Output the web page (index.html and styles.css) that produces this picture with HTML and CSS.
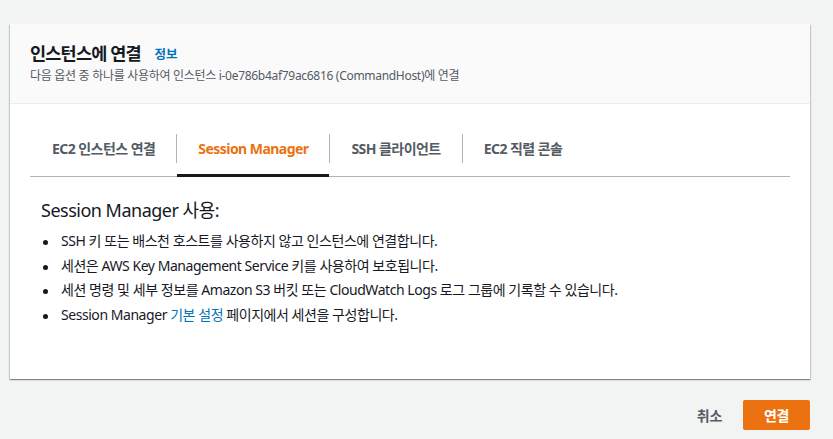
FILE: index.html
```html
<!DOCTYPE html>
<html lang="ko">
<head>
<meta charset="utf-8">
<link rel="stylesheet" href="styles.css">
</head>
<body>
<div class="page">
  <section class="card">
    <header class="card-header">
      <h1 class="title">인스턴스에 연결 <a class="info">정보</a></h1>
      <p class="subtitle">다음 옵션 중 하나를 사용하여 인스턴스 i-0e786b4af79ac6816 (CommandHost)에 연결</p>
    </header>
    <div class="card-body">
      <ul class="tabs">
        <li class="tab first"><span class="tab-label">EC2 인스턴스 연결</span></li>
        <li class="tab active"><span class="tab-label">Session Manager</span></li>
        <li class="tab"><span class="tab-label">SSH 클라이언트</span></li>
        <li class="tab"><span class="tab-label">EC2 직렬 콘솔</span></li>
      </ul>
      <div class="panel">
        <h2 class="panel-title">Session Manager 사용:</h2>
        <ul class="bullets">
          <li>SSH 키 또는 배스천 호스트를 사용하지 않고 인스턴스에 연결합니다.</li>
          <li>세션은 AWS Key Management Service 키를 사용하여 보호됩니다.</li>
          <li>세션 명령 및 세부 정보를 Amazon S3 버킷 또는 CloudWatch Logs 로그 그룹에 기록할 수 있습니다.</li>
          <li>Session Manager <a class="link">기본 설정</a> 페이지에서 세션을 구성합니다.</li>
        </ul>
      </div>
    </div>
  </section>
  <div class="actions">
    <button class="btn-cancel">취소</button>
    <button class="btn-primary">연결</button>
  </div>
</div>
</body>
</html>
```

FILE: styles.css
```css
* { box-sizing: border-box; }
html, body { margin: 0; padding: 0; }
body {
  background: #f2f3f3;
  font-family: "Noto Sans", "Noto Sans CJK KR", sans-serif;
  color: #16191f;
  width: 833px;
  height: 439px;
  overflow: hidden;
}
.page {
  width: 800px;
  margin-left: 10px;
  padding-top: 24px;
}
.card {
  background: #fff;
  height: 355px;
  box-shadow: 0 1px 1px 0 rgba(0,28,36,.3), 1px 1px 1px 0 rgba(0,28,36,.15), -1px 1px 1px 0 rgba(0,28,36,.15);
}
.card-header {
  background: #fafafa;
  border-bottom: 1px solid #eaeded;
  height: 80px;
  padding: 17px 20px 0;
}
.title {
  margin: 0;
  font-size: 17.5px;
  font-weight: 700;
  line-height: 24px;
  letter-spacing: -0.8px;
  color: #16191f;
}
.info {
  margin-left: 10px;
  font-size: 12.5px;
  color: #0073bb;
  letter-spacing: -0.2px;
  vertical-align: 1px;
}
.subtitle {
  margin: 0;
  font-size: 12px;
  line-height: 18px;
  color: #545b64;
  letter-spacing: -0.3px;
}
.card-body {
  padding: 20px 20px 0;
}
.tabs {
  list-style: none;
  margin: 0;
  padding: 0;
  display: flex;
  border-bottom: 1px solid #aab7b8;
}
.tab {
  position: relative;
  padding: 10px 0 13px;
}
.tab-label {
  display: block;
  padding: 4px 21px;
  line-height: 21px;
  font-size: 14px;
  font-weight: 700;
  color: #545b64;
  border-left: 1px solid #aab7b8;
  letter-spacing: -0.55px;
}
.tab.first .tab-label { border-left-color: transparent; }
.tab.active .tab-label { color: #ec7211; }
.tab.active::after {
  content: "";
  position: absolute;
  left: 1px;
  right: 0;
  bottom: -1px;
  height: 3px;
  background: #16191f;
}
.panel {
  padding: 20px 11px 0;
}
.panel-title {
  margin: 0 0 6px;
  font-size: 18px;
  font-weight: 400;
  line-height: 26px;
  letter-spacing: -0.5px;
}
.bullets {
  list-style: none;
  margin: 0;
  padding-left: 20px;
  font-size: 14px;
  line-height: 24.5px;
  letter-spacing: -0.45px;
}
.bullets li { position: relative; }
.bullets li::before {
  content: "";
  position: absolute;
  left: -18px;
  top: 11px;
  width: 5px;
  height: 5px;
  border-radius: 50%;
  background: #16191f;
}
.link { color: #0073bb; }
.actions {
  display: flex;
  justify-content: flex-end;
  align-items: center;
  margin-top: 21px;
}
.btn-cancel, .btn-primary {
  font-family: inherit;
  font-size: 14px;
  font-weight: 700;
  border: none;
  cursor: pointer;
  letter-spacing: -0.3px;
}
.btn-cancel {
  background: transparent;
  color: #545b64;
  padding: 4px 20px;
  margin-right: 1px;
}
.btn-primary {
  background: #ec7211;
  color: #fff;
  width: 67px;
  height: 30px;
  border-radius: 2px;
  padding: 0;
}
```
